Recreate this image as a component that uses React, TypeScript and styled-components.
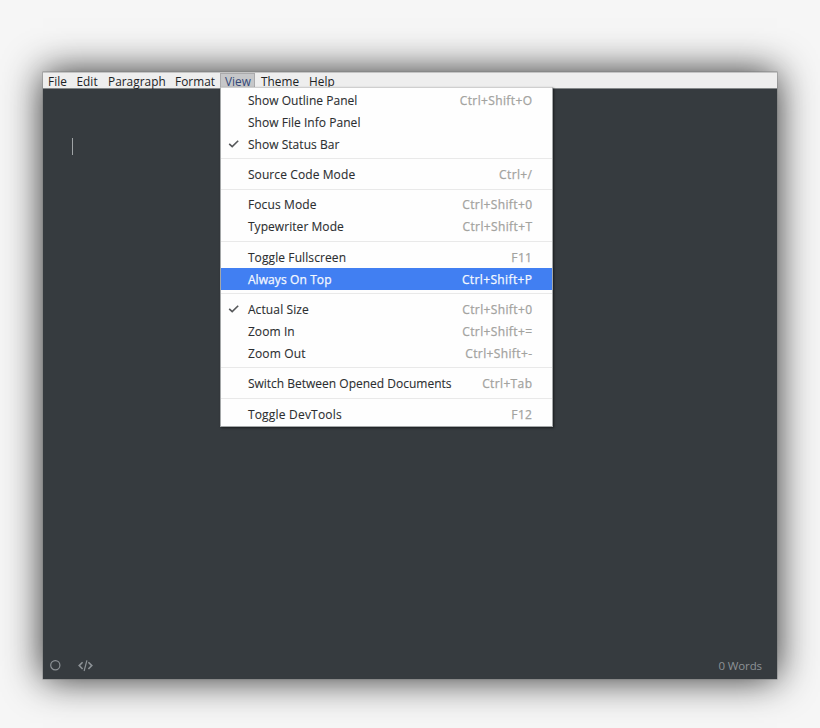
import React from 'react';
import styled, { createGlobalStyle } from 'styled-components';

const GlobalStyle = createGlobalStyle`
  * { box-sizing: border-box; }
  html, body { margin: 0; height: 100%; }
  body {
    background: #f6f6f6;
    font-family: 'Open Sans', 'Noto Sans', sans-serif;
    overflow: hidden;
  }
`;

const Desktop = styled.main`
  height: 728px;
  width: 820px;
  padding: 72px 43px 49px;
`;

const Window = styled.section`
  display: flex;
  flex-direction: column;
  width: 734px;
  height: 607px;
  background: #363b3f;
  box-shadow: 0 0 0 0.5px rgba(120, 122, 124, 0.8), 0 0 36px 0 rgba(0, 0, 0, 0.84);
`;

const MenuBar = styled.nav`
  display: flex;
  height: 17px;
  flex: none;
  background: #eeeeee;
  border-top: 1px solid #c4c4c4;
  border-bottom: 1px solid #848889;
`;

const MenuSlot = styled.div<{ $width: number }>`
  position: relative;
  width: ${(p) => p.$width}px;
  flex: none;
`;

const MenuTitle = styled.div<{ $open?: boolean }>`
  width: ${(p) => (p.$open ? '35px' : '100%')};
  height: 15px;
  padding-left: ${(p) => (p.$open ? 4 : 5)}px;
  border: 1px solid ${(p) => (p.$open ? '#aaaaac' : 'transparent')};
  border-width: ${(p) => (p.$open ? '1px' : '1px 0 0')};
  border-bottom-color: transparent;
  background: ${(p) => (p.$open ? '#c6c7c9' : 'transparent')};
  color: ${(p) => (p.$open ? '#344878' : '#202224')};
  font-size: 11.8px;
  line-height: 14px;
  letter-spacing: 0.05px;
  white-space: nowrap;
`;

const Dropdown = styled.div`
  position: absolute;
  z-index: 2;
  top: 14px;
  left: -0.5px;
  width: 333px;
  height: 340px;
  padding-top: 1.2px;
  background: #fefefe;
  border: 1px solid #a4a7a8;
  border-top-color: #cfcfcf;
  box-shadow: 1px 1px 2px rgba(0, 0, 0, 0.5);
`;

const Item = styled.div<{ $active?: boolean }>`
  display: flex;
  align-items: center;
  height: 21.9px;
  padding-right: 19.5px;
  background: ${(p) => (p.$active ? '#417ff2' : 'transparent')};
  color: ${(p) => (p.$active ? '#f4f8ff' : '#2c2e30')};
  font-size: 12px;
  line-height: 16px;
  white-space: nowrap;
  -webkit-text-stroke: ${(p) => (p.$active ? '0.25px' : '0.1px')};
`;

const CheckSlot = styled.span`
  display: flex;
  width: 27.4px;
  padding-left: 7.5px;
  flex: none;
`;

const Label = styled.span<{ $spacing: number }>`
  flex: 1;
  padding-top: 1.4px;
  letter-spacing: ${(p) => p.$spacing}px;
`;

const Shortcut = styled.span<{ $active?: boolean }>`
  padding-top: 1.4px;
  color: ${(p) => (p.$active ? '#f4f8ff' : '#a3a39f')};
  letter-spacing: 0.37px;
  margin-right: -0.37px;
  -webkit-text-stroke: 0.25px;
`;

const Separator = styled.div`
  height: 8.5px;
  padding-top: 3.5px;

  &::before {
    content: '';
    display: block;
    height: 1px;
    background: #e9e9e9;
  }
`;

const Editor = styled.div`
  flex: 1;
  padding: 49px 29px;
`;

const Caret = styled.div`
  width: 1px;
  height: 17px;
  background: #a0a4a6;
`;

const StatusBar = styled.footer`
  display: flex;
  align-items: center;
  height: 27px;
  padding: 0 15px 0 7px;
  color: #8d9296;
  font-size: 11.5px;
`;

const StatusIcons = styled.div`
  display: flex;
  flex: 1;
  align-items: center;
  gap: 16.5px;
`;

const WordCount = styled.span`
  letter-spacing: -0.1px;
`;

const CheckMark = () => (
  <svg width="12" height="10" viewBox="0 0 12 10" fill="none" stroke="#56585a" strokeWidth="1.6">
    <path d="M1.2 4.8 L4.2 7.6 L10.2 1.7" />
  </svg>
);

type Entry = { label: string; keys?: string; checked?: boolean; active?: boolean; spacing?: number };

const groups: Entry[][] = [
  [
    { label: 'Show Outline Panel', keys: 'Ctrl+Shift+O' },
    { label: 'Show File Info Panel' },
    { label: 'Show Status Bar', checked: true },
  ],
  [{ label: 'Source Code Mode', keys: 'Ctrl+/', spacing: 0.1 }],
  [
    { label: 'Focus Mode', keys: 'Ctrl+Shift+0', spacing: 0.12 },
    { label: 'Typewriter Mode', keys: 'Ctrl+Shift+T', spacing: 0.06 },
  ],
  [
    { label: 'Toggle Fullscreen', keys: 'F11', spacing: 0.1 },
    { label: 'Always On Top', keys: 'Ctrl+Shift+P', active: true, spacing: 0.1 },
  ],
  [
    { label: 'Actual Size', keys: 'Ctrl+Shift+0', checked: true, spacing: 0.12 },
    { label: 'Zoom In', keys: 'Ctrl+Shift+=', spacing: 0.1 },
    { label: 'Zoom Out', keys: 'Ctrl+Shift+-', spacing: 0.16 },
  ],
  [{ label: 'Switch Between Opened Documents', keys: 'Ctrl+Tab', spacing: 0 }],
  [{ label: 'Toggle DevTools', keys: 'F12', spacing: 0.2 }],
];

const ViewMenu = () => (
  <Dropdown>
    {groups.map((group, index) => (
      <React.Fragment key={index}>
        {index > 0 && <Separator />}
        {group.map((entry) => (
          <Item key={entry.label} $active={entry.active}>
            <CheckSlot>{entry.checked && <CheckMark />}</CheckSlot>
            <Label $spacing={entry.spacing ?? 0.04}>{entry.label}</Label>
            {entry.keys && <Shortcut $active={entry.active}>{entry.keys}</Shortcut>}
          </Item>
        ))}
      </React.Fragment>
    ))}
  </Dropdown>
);

const menus = [
  { title: 'File', width: 28.5 },
  { title: 'Edit', width: 31.5 },
  { title: 'Paragraph', width: 67 },
  { title: 'Format', width: 50 },
  { title: 'View', width: 36, open: true },
  { title: 'Theme', width: 48 },
  { title: 'Help', width: 37 },
];

export default function App() {
  return (
    <Desktop>
      <GlobalStyle />
      <Window>
        <MenuBar>
          {menus.map((menu) => (
            <MenuSlot key={menu.title} $width={menu.width}>
              <MenuTitle $open={menu.open}>{menu.title}</MenuTitle>
              {menu.open && <ViewMenu />}
            </MenuSlot>
          ))}
        </MenuBar>
        <Editor>
          <Caret />
        </Editor>
        <StatusBar>
          <StatusIcons>
            <svg width="11" height="11" viewBox="0 0 11 11" fill="none" stroke="#8d9296" strokeWidth="1.2">
              <circle cx="5.3" cy="5.2" r="4.6" />
            </svg>
            <svg width="15" height="12" viewBox="0 0 15 12" fill="none" stroke="#8d9296" strokeWidth="1.6">
              <path d="M4.6 2.2 L1.2 5.6 L4.6 9 M10.4 2.2 L13.8 5.6 L10.4 9" />
              <path d="M8.9 0.4 L6.1 11" strokeWidth="1.2" />
            </svg>
          </StatusIcons>
          <WordCount>0 Words</WordCount>
        </StatusBar>
      </Window>
    </Desktop>
  );
}
